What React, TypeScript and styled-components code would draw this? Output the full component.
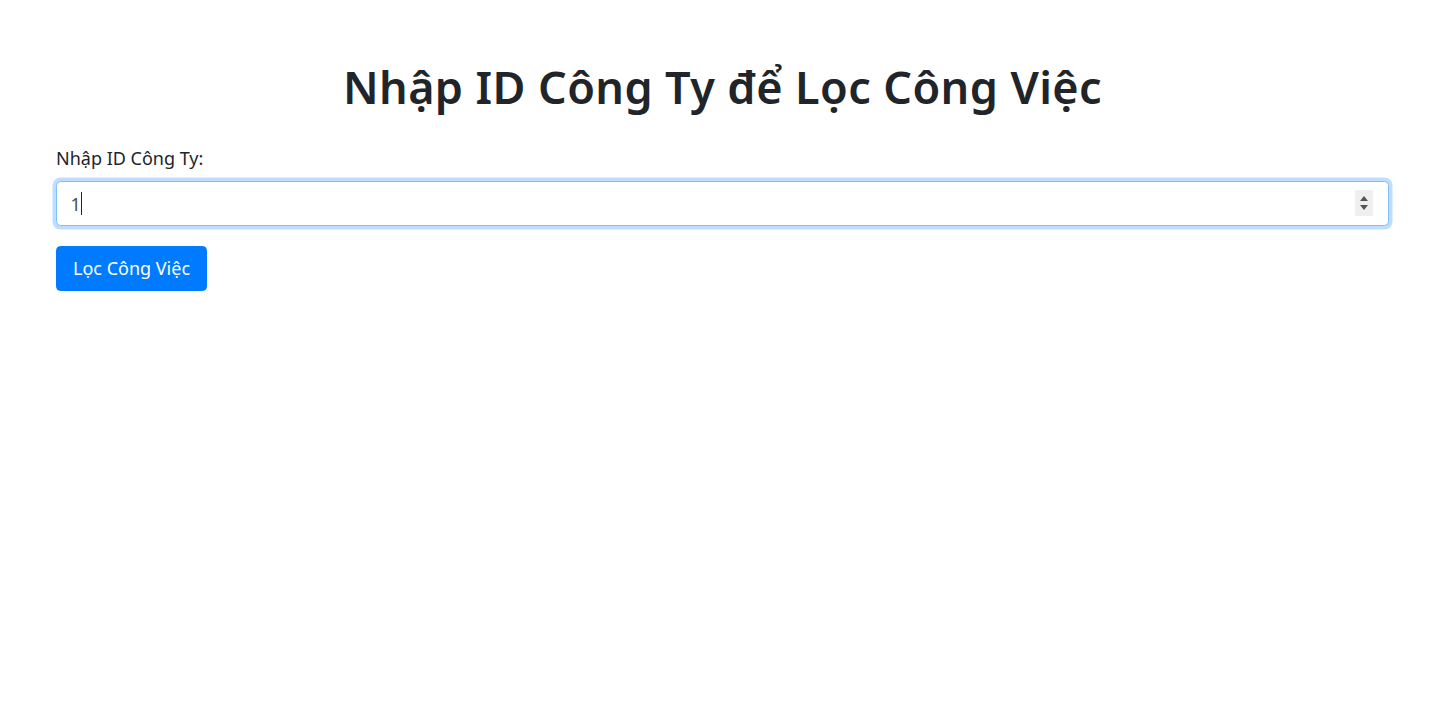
import React from "react";
import styled, { createGlobalStyle } from "styled-components";

const Global = createGlobalStyle`
  html, body { margin: 0; padding: 0; background: #fff; }
  body {
    font-family: "Noto Sans", "Open Sans", "Liberation Sans", sans-serif;
    color: #212529;
    font-size: 18px;
    line-height: 1.5;
  }
`;

const Page = styled.div`
  padding: 60px 56px 0;
`;

const Title = styled.h1`
  margin: 0 0 31px;
  text-align: center;
  font-size: 45px;
  font-weight: 600;
  line-height: 54px;
  letter-spacing: 0.4px;
  color: #212529;
`;

const Group = styled.div`
  display: flex;
  flex-direction: column;
  gap: 9px;
  margin-bottom: 20px;
`;

const Label = styled.label`
  font-size: 18px;
  line-height: 27px;
  color: #212529;
`;

const InputWrap = styled.div`
  position: relative;
`;

const Input = styled.input`
  box-sizing: border-box;
  width: 100%;
  height: 45px;
  padding: 0 13.5px;
  font: inherit;
  font-size: 18px;
  color: #495057;
  background: #fff;
  border: 1px solid #80bdff;
  border-radius: 4.5px;
  outline: none;
  box-shadow: 0 0 0 3.5px rgba(0, 123, 255, 0.25);
`;

const Caret = styled.span`
  position: absolute;
  left: 25px;
  top: 11px;
  width: 1px;
  height: 23px;
  background: #212529;
`;

const Spinner = styled.div`
  position: absolute;
  right: 16px;
  top: 9px;
  width: 18px;
  height: 26px;
  background: #efefef;
  display: flex;
  flex-direction: column;
  align-items: center;
  justify-content: center;
  gap: 4px;
`;

const Arrow = styled.span<{ $up?: boolean }>`
  width: 0;
  height: 0;
  border-left: 4.5px solid transparent;
  border-right: 4.5px solid transparent;
  ${(p) =>
    p.$up
      ? "border-bottom: 5px solid #555;"
      : "border-top: 5px solid #555;"}
`;

const Button = styled.button`
  box-sizing: border-box;
  height: 45px;
  padding: 0 16px;
  font: inherit;
  font-size: 18px;
  color: #fff;
  background: #007bff;
  border: 1px solid #007bff;
  border-radius: 4.5px;
  cursor: pointer;
`;

export default function App() {
  return (
    <>
      <Global />
      <Page>
        <Title>Nhập ID Công Ty để Lọc Công Việc</Title>
        <Group>
          <Label htmlFor="cid">Nhập ID Công Ty:</Label>
          <InputWrap>
            <Input id="cid" type="text" defaultValue="1" readOnly />
            <Caret />
            <Spinner>
              <Arrow $up />
              <Arrow />
            </Spinner>
          </InputWrap>
        </Group>
        <Button>Lọc Công Việc</Button>
      </Page>
    </>
  );
}
